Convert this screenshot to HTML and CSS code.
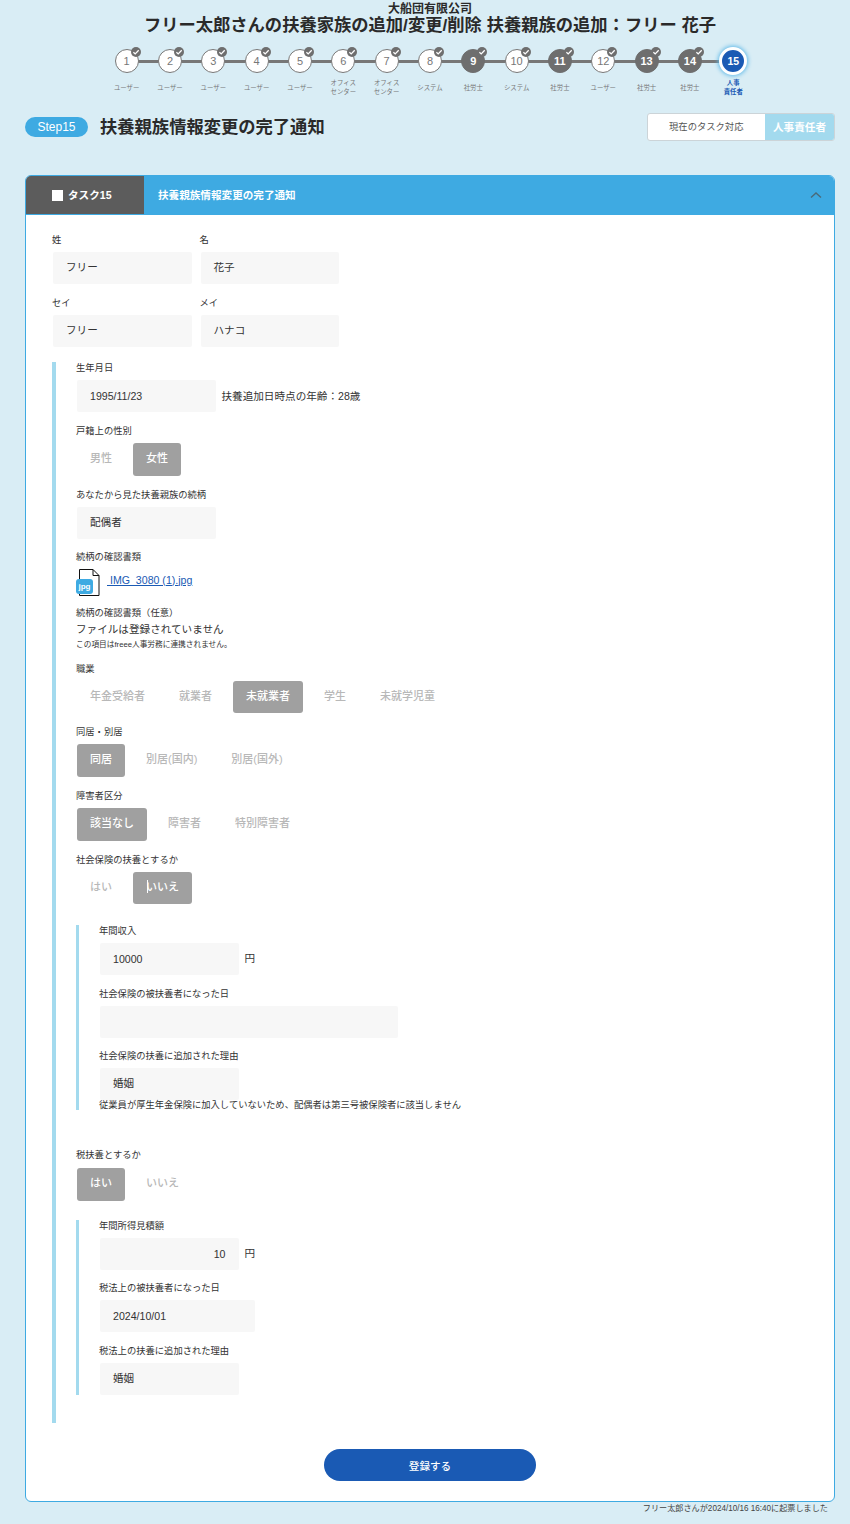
FILE: index.html
```html
<!DOCTYPE html>
<html lang="ja">
<head>
<meta charset="utf-8">
<title>扶養親族情報変更の完了通知</title>
<link rel="stylesheet" href="styles.css">
</head>
<body>
<svg class="defs" width="0" height="0"><defs>
<symbol id="chk" viewBox="0 0 10 10"><path d="M2.400 5.200 4.200 6.900 7.700 3.300" fill="none" stroke="#fff" stroke-width="1.300"/></symbol>
</defs></svg>
<div class="page">
  <header class="head">
    <div class="company">大船団有限公司</div>
    <h1 class="title">フリー太郎さんの扶養家族の追加/変更/削除 扶養親族の追加：フリー 花子</h1>
  </header>
  <ol class="stepper">
    <li class="step done"><span class="dot">1<svg class="badge"><use href="#chk"/></svg></span><span class="who">ユーザー</span></li>
    <li class="step done"><span class="dot">2<svg class="badge"><use href="#chk"/></svg></span><span class="who">ユーザー</span></li>
    <li class="step done"><span class="dot">3<svg class="badge"><use href="#chk"/></svg></span><span class="who">ユーザー</span></li>
    <li class="step done"><span class="dot">4<svg class="badge"><use href="#chk"/></svg></span><span class="who">ユーザー</span></li>
    <li class="step done"><span class="dot">5<svg class="badge"><use href="#chk"/></svg></span><span class="who">ユーザー</span></li>
    <li class="step done"><span class="dot">6<svg class="badge"><use href="#chk"/></svg></span><span class="who">オフィス<br>センター</span></li>
    <li class="step done"><span class="dot">7<svg class="badge"><use href="#chk"/></svg></span><span class="who">オフィス<br>センター</span></li>
    <li class="step done"><span class="dot">8<svg class="badge"><use href="#chk"/></svg></span><span class="who">システム</span></li>
    <li class="step dark"><span class="dot">9<svg class="badge"><use href="#chk"/></svg></span><span class="who">社労士</span></li>
    <li class="step done"><span class="dot">10<svg class="badge"><use href="#chk"/></svg></span><span class="who">システム</span></li>
    <li class="step dark"><span class="dot">11<svg class="badge"><use href="#chk"/></svg></span><span class="who">社労士</span></li>
    <li class="step done"><span class="dot">12<svg class="badge"><use href="#chk"/></svg></span><span class="who">ユーザー</span></li>
    <li class="step dark"><span class="dot">13<svg class="badge"><use href="#chk"/></svg></span><span class="who">社労士</span></li>
    <li class="step dark"><span class="dot">14<svg class="badge"><use href="#chk"/></svg></span><span class="who">社労士</span></li>
    <li class="step current"><span class="dot">15</span><span class="who">人事<br>責任者</span></li>
  </ol>
  <div class="steprow">
    <span class="pill">Step15</span>
    <h2 class="steptitle">扶養親族情報変更の完了通知</h2>
    <div class="owner"><span class="owner-l">現在のタスク対応</span><span class="owner-r">人事責任者</span></div>
  </div>
  <section class="card">
    <div class="card-head">
      <div class="tab"><span class="square"></span><span class="tab-text">タスク15</span></div>
      <div class="card-title">扶養親族情報変更の完了通知</div>
      <svg class="chev" width="12" height="8" viewBox="0 0 12 8"><path d="M1 6.500 6 2l5 4.500" fill="none" stroke="#4a6a7a" stroke-width="1.400"/></svg>
    </div>
    <div class="card-body">
      <div class="name-row">
        <div class="field"><div class="label">姓</div><div class="input">フリー</div></div>
        <div class="field"><div class="label">名</div><div class="input">花子</div></div>
      </div>
      <div class="name-row">
        <div class="field"><div class="label">セイ</div><div class="input">フリー</div></div>
        <div class="field"><div class="label">メイ</div><div class="input">ハナコ</div></div>
      </div>
      <div class="section">
        <div class="field"><div class="label">生年月日</div>
          <div class="inline"><div class="input num">1995/11/23</div><span class="after">扶養追加日時点の年齢：28歳</span></div></div>
        <div class="field"><div class="label">戸籍上の性別</div>
          <div class="btns"><span class="opt">男性</span><span class="opt on">女性</span></div></div>
        <div class="field before-file"><div class="label">あなたから見た扶養親族の続柄</div><div class="input">配偶者</div></div>
        <div class="field file-field"><div class="label">続柄の確認書類</div>
          <div class="file">
            <svg class="fileicon" width="24" height="27" viewBox="0 0 24 27">
              <path d="M3.500 10V.5h13.500l6 6v20H3.500V25" fill="#fff" stroke="#111" stroke-width="1"/>
              <path d="M17 .5v6h6" fill="none" stroke="#111" stroke-width="1"/>
              <rect x="0" y="10" width="17" height="15" rx="3" fill="#3eaae2"/>
              <text class="jpg" x="8.500" y="20">jpg</text>
            </svg>
            <a class="link" href="#"> IMG_3080 (1).jpg</a>
          </div></div>
        <div class="field opt-file"><div class="label">続柄の確認書類（任意）</div>
          <div class="plain">ファイルは登録されていません</div>
          <div class="tiny">この項目はfreee人事労務に連携されません。</div></div>
        <div class="field"><div class="label">職業</div>
          <div class="btns"><span class="opt">年金受給者</span><span class="opt">就業者</span><span class="opt on">未就業者</span><span class="opt">学生</span><span class="opt">未就学児童</span></div></div>
        <div class="field"><div class="label">同居・別居</div>
          <div class="btns"><span class="opt on">同居</span><span class="opt">別居(国内)</span><span class="opt">別居(国外)</span></div></div>
        <div class="field"><div class="label">障害者区分</div>
          <div class="btns"><span class="opt on">該当なし</span><span class="opt">障害者</span><span class="opt">特別障害者</span></div></div>
        <div class="field gap-l"><div class="label">社会保険の扶養とするか</div>
          <div class="btns"><span class="opt">はい</span><span class="opt on caret-host">いいえ<i class="caret"></i></span></div></div>
        <div class="sub sub-first">
          <div class="field"><div class="label">年間収入</div>
            <div class="inline"><div class="input num">10000</div><span class="unit">円</span></div></div>
          <div class="field"><div class="label">社会保険の被扶養者になった日</div><div class="input wide"></div></div>
          <div class="field tight"><div class="label">社会保険の扶養に追加された理由</div><div class="input">婚姻</div>
            <div class="subnote">従業員が厚生年金保険に加入していないため、配偶者は第三号被保険者に該当しません</div></div>
        </div>
        <div class="field tax"><div class="label">税扶養とするか</div>
          <div class="btns"><span class="opt on">はい</span><span class="opt">いいえ</span></div></div>
        <div class="sub">
          <div class="field"><div class="label">年間所得見積額</div>
            <div class="inline"><div class="input right num">10</div><span class="unit">円</span></div></div>
          <div class="field"><div class="label">税法上の被扶養者になった日</div><div class="input mid num">2024/10/01</div></div>
          <div class="field tight"><div class="label">税法上の扶養に追加された理由</div><div class="input">婚姻</div></div>
        </div>
      </div>
      <div class="submit-wrap"><button class="submit" type="button">登録する</button></div>
    </div>
  </section>
  <p class="foot">フリー太郎さんが2024/10/16 16:40に起票しました</p>
</div>
</body>
</html>
```
FILE: styles.css
```css
* { box-sizing: border-box; }
html, body { margin: 0; padding: 0; }
body {
  background: #d9edf5;
  color: #333;
  font-family: "Liberation Sans", "Noto Sans CJK JP", sans-serif;
  height: 1524px;
  overflow: hidden;
}
.defs { display: block; height: 0; }
.page { width: 850px; padding: 3px 15px 0 25px; }

.head { text-align: center; color: #2a2a2a; }
.company { font-size: 12px; line-height: 12px; font-weight: 700; }
.title { margin: 0; font-size: 17.300px; line-height: 20px; font-weight: 700; }

.stepper {
  list-style: none;
  margin: 12px 0 0 80px;
  padding: 0;
  width: 650px;
  display: flex;
}
.step {
  position: relative;
  width: 43.330px;
  display: flex;
  flex-direction: column;
  align-items: center;
}
.step::before {
  content: "";
  position: absolute;
  top: 12.500px;
  left: -50%;
  width: 100%;
  height: 3px;
  background: #777;
}
.step:first-child::before { display: none; }
.dot {
  position: relative;
  z-index: 1;
  width: 24px;
  height: 24px;
  margin: 2px 0;
  border-radius: 50%;
  border: 1px solid #777;
  background: #fff;
  color: #777;
  font-size: 11px;
  display: flex;
  align-items: center;
  justify-content: center;
}
.badge {
  position: absolute;
  top: -3px;
  right: -3px;
  width: 10px;
  height: 10px;
  border-radius: 50%;
  background: #6e6e6e;
}
.dark .dot { background: #6e6e6e; border-color: #6e6e6e; color: #fff; font-weight: 700; }
.current .dot {
  width: 28px;
  height: 28px;
  margin: 0;
  border: 3px solid #fff;
  background: #1a5ab4;
  color: #fff;
  font-weight: 700;
  font-size: 10.500px;
  box-shadow: 0 0 4px 1px #5cb8e8;
}
.who {
  height: 18px;
  margin-top: 3px;
  display: flex;
  align-items: center;
  text-align: center;
  font-size: 6.400px;
  line-height: 9px;
  color: #777;
  white-space: nowrap;
}
.current .who { color: #1a5ab4; font-weight: 700; }

.steprow { display: flex; align-items: center; height: 28px; margin-top: 17px; }
.pill {
  width: 63px;
  height: 20px;
  border-radius: 10px;
  background: #3eaae2;
  color: #fff;
  font-size: 12px;
  line-height: 20px;
  text-align: center;
}
.steptitle { margin: 0 0 3px 12px; font-size: 17.300px; font-weight: 700; color: #2a2a2a; }
.owner {
  margin-left: auto;
  width: 188.500px;
  height: 28px;
  display: flex;
  border: 1px solid #ccd4d8;
  border-radius: 3px;
  overflow: hidden;
  background: #fff;
  line-height: 26px;
  text-align: center;
}
.owner-l { width: 117.500px; font-size: 9.300px; color: #555; }
.owner-r { flex: 1; background: #a3daee; color: #fff; font-size: 10.600px; font-weight: 700; }

.card {
  margin-top: 34px;
  width: 810px;
  height: 1327px;
  border-radius: 6px;
  border: 1px solid #3eaae2;
  background: #fff;
  overflow: hidden;
}
.card-head {
  margin: -1px -1px 0;
  height: 40px;
  background: #3eaae2;
  display: flex;
  align-items: center;
  color: #fff;
  font-weight: 700;
}
.tab {
  width: 119px;
  height: 38px;
  background: #5c5c5c;
  display: flex;
  align-items: center;
  padding-left: 27px;
  font-size: 10.600px;
}
.square { width: 11px; height: 11px; background: #fff; margin-right: 5px; }
.tab-text { margin-bottom: 2px; }
.card-title { margin: 0 0 2px 14px; font-size: 10.600px; }
.chev { margin-left: auto; margin-right: 13px; }

.card-body { padding: 19px 0 0 26px; }
.name-row { display: flex; gap: 8px; }
.field { margin-bottom: 13px; }
.label { font-size: 9.300px; line-height: 12px; margin-bottom: 6px; color: #333; }
.input {
  width: 138.500px;
  height: 32px;
  margin-left: 1px;
  padding: 0 13px;
  background: #f7f7f7;
  border-radius: 2px;
  font-size: 10.600px;
  line-height: 30px;
  color: #333;
}
.input.num { line-height: 32px; }
.input.wide { width: 298px; }
.input.mid { width: 155px; }
.input.right { text-align: right; }
.inline { display: flex; align-items: center; }
.after { margin: 0 0 2px 6px; font-size: 10.600px; }
.unit { margin: 0 0 3px 6px; font-size: 10.600px; }

.section {
  margin-top: 2px;
  height: 1061px;
  border-left: 4px solid #a3daee;
  padding-left: 20px;
}
.btns { display: flex; gap: 8px; margin-left: 1px; }
.opt {
  height: 32.670px;
  padding: 0 13px;
  border-radius: 3px;
  font-size: 11px;
  font-weight: 500;
  line-height: 30px;
  color: #b8b8b8;
}
.opt.on { background: #a0a0a0; color: #fff; }
.caret-host { position: relative; }
.caret {
  position: absolute;
  left: 14px;
  top: 8px;
  width: 1px;
  height: 13px;
  background: #fff;
}
.before-file { margin-bottom: 12px; }
.file { display: flex; align-items: flex-start; height: 28px; }
.file-field { margin-bottom: 10px; }
.link { margin: 5px 0 0 7px; font-size: 10.600px; color: #1a5ab4; white-space: pre; }
.jpg { fill: #fff; font-size: 8px; font-weight: 700; text-anchor: middle; font-family: "Liberation Sans", sans-serif; }
.opt-file .label { margin-bottom: 2px; }
.opt-file { margin-bottom: 12px; }
.plain { font-size: 10.600px; line-height: 16px; }
.tiny { font-size: 7.700px; line-height: 12px; margin-top: 2px; }
.gap-l { margin-bottom: 24px; }
.sub { border-left: 3px solid #a3daee; padding-left: 20px; width: 700px; }
.sub .field { margin-bottom: 12.500px; }
.sub-first { height: 185px; }
.sub .field:first-child .label { margin-top: -3px; }
.sub .tight { margin-bottom: 0; }
.subnote { font-size: 9.300px; line-height: 11px; }
.tax { margin-top: 39px; margin-bottom: 22px; }
.tax .label { margin-bottom: 7px; }
.submit-wrap { display: flex; justify-content: center; margin: 26px 26px 0 0; }
.submit {
  width: 212px;
  height: 32px;
  border: 0;
  border-radius: 16px;
  background: #1a5ab4;
  color: #fff;
  font: 500 10.600px "Liberation Sans", "Noto Sans CJK JP", sans-serif;
}
.foot { margin: 1px 7px 0 0; text-align: right; font-size: 8.150px; line-height: 12px; color: #444; }
```
